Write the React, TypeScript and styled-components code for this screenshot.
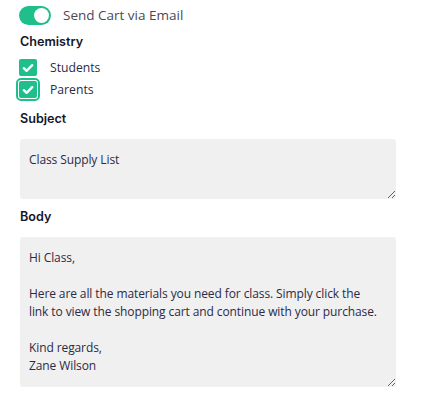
import styled, { createGlobalStyle } from 'styled-components';

const GlobalStyle = createGlobalStyle`
  body {
    margin: 0;
    background: #ffffff;
    font-family: 'Open Sans', 'Liberation Sans', sans-serif;
  }
`;

const green = '#1fbf8b';

const Page = styled.div`
  padding: 6px 0 0 20px;
  width: 376px;
`;

const ToggleRow = styled.div`
  display: flex;
  align-items: center;
  gap: 12px;
  height: 18px;
`;

const Switch = styled.span<{ on: boolean }>`
  position: relative;
  display: inline-block;
  flex: none;
  width: 32px;
  height: 19px;
  margin-left: -1px;
  border-radius: 10px;
  background: ${({ on }) => (on ? green : '#c9c9c9')};
  &::after {
    content: '';
    position: absolute;
    top: 2px;
    left: ${({ on }) => (on ? '15px' : '2px')};
    width: 15px;
    height: 15px;
    border-radius: 50%;
    background: #ffffff;
  }
`;

const ToggleText = styled.span`
  font-size: 13.5px;
  color: #4a4a55;
`;

const Label = styled.div<{ top: number }>`
  font-family: 'Inter', 'DejaVu Sans', sans-serif;
  font-weight: 600;
  font-size: 12.6px;
  line-height: 18px;
  color: #16162a;
  margin-top: ${({ top }) => top}px;
`;

const CheckList = styled.div`
  display: flex;
  flex-direction: column;
  gap: 5px;
  margin-top: 8px;
`;

const CheckRow = styled.label`
  display: flex;
  align-items: center;
  gap: 13px;
  height: 17px;
  font-size: 12.2px;
  color: #2c2a45;
`;

const Box = styled.span<{ focused?: boolean }>`
  display: flex;
  align-items: center;
  justify-content: center;
  flex: none;
  width: 18px;
  height: 17px;
  margin-left: -1px;
  border-radius: 2px;
  background: ${green};
  outline: ${({ focused }) => (focused ? `2px solid ${green}` : 'none')};
  outline-offset: 1px;
`;

const Field = styled.textarea<{ h: number }>`
  display: block;
  box-sizing: border-box;
  width: 376px;
  height: ${({ h }) => h}px;
  margin-top: 11px;
  padding: 12px 9px;
  border: none;
  border-radius: 3px;
  background: #f0f0f0;
  font-family: 'Open Sans', 'Liberation Sans', sans-serif;
  font-size: 12px;
  letter-spacing: -0.1px;
  line-height: 18px;
  color: #2c2a45;
  resize: vertical;
  overflow: hidden;
  outline: none;
`;

const Check = () => (
  <svg width="12" height="10" viewBox="0 0 12 10" fill="none">
    <path d="M1.8 5.2L4.6 7.8L10.2 2.2" stroke="#fff" strokeWidth="2.4" strokeLinecap="round" strokeLinejoin="round" />
  </svg>
);

const bodyText = `Hi Class,

Here are all the materials you need for class. Simply click the
link to view the shopping cart and continue with your purchase.

Kind regards,
Zane Wilson`;

export default function App() {
  return (
    <Page>
      <GlobalStyle />
      <ToggleRow>
        <Switch on />
        <ToggleText>Send Cart via Email</ToggleText>
      </ToggleRow>

      <Label top={9}>Chemistry</Label>
      <CheckList>
        <CheckRow>
          <Box><Check /></Box>
          Students
        </CheckRow>
        <CheckRow>
          <Box focused><Check /></Box>
          Parents
        </CheckRow>
      </CheckList>

      <Label top={12}>Subject</Label>
      <Field h={60} readOnly defaultValue="Class Supply List" />

      <Label top={9}>Body</Label>
      <Field h={150} readOnly defaultValue={bodyText} />
    </Page>
  );
}
